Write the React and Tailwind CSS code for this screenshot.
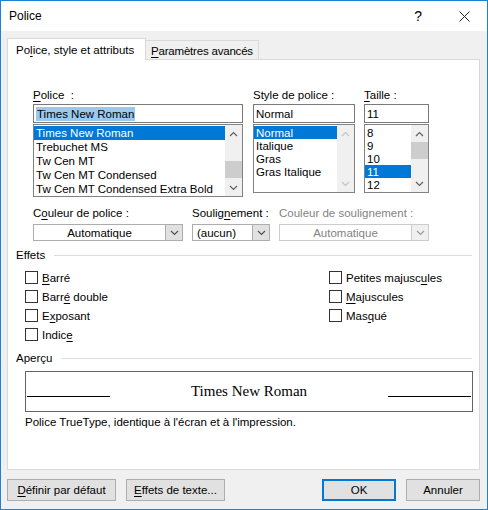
import React from 'react'

const FONTS = ['Times New Roman', 'Trebuchet MS', 'Tw Cen MT', 'Tw Cen MT Condensed', 'Tw Cen MT Condensed Extra Bold']
const STYLES = ['Normal', 'Italique', 'Gras', 'Gras Italique']
const SIZES = ['8', '9', '10', '11', '12']

function Chevron({ up, color = '#606060' }) {
  return (
    <svg width="9" height="6" viewBox="0 0 9 6" fill="none">
      <path d={up ? 'M1 5l3.5-3.5L8 5' : 'M1 1l3.5 3.5L8 1'} stroke={color} strokeWidth="1.2" />
    </svg>
  )
}

function ScrollBar({ thumbTop, disabled }) {
  return (
    <div className="w-[17px] shrink-0 flex flex-col bg-[#f0f0f0]">
      <div className="h-[17px] flex items-center justify-center">
        <Chevron up color={disabled ? '#c4c4c4' : '#606060'} />
      </div>
      <div className="flex-1 relative">
        {!disabled && (
          <div className="absolute left-0 right-0 h-[17px] bg-[#cdcdcd]" style={{ top: thumbTop }} />
        )}
      </div>
      <div className="h-[17px] flex items-center justify-center">
        <Chevron color={disabled ? '#c4c4c4' : '#606060'} />
      </div>
    </div>
  )
}

function ListBox({ items, selected, rowH, height, thumbTop, disabled }) {
  return (
    <div className="flex border border-[#828282] bg-white" style={{ height }}>
      <div className="flex-1 min-w-0 pt-[1px] overflow-hidden">
        {items.map((it) => (
          <div
            key={it}
            className={`pl-[2px] whitespace-nowrap flex items-center ${
              it === selected ? 'bg-[#0078d7] text-white' : 'text-black'
            }`}
            style={{ height: rowH }}
          >
            {it}
          </div>
        ))}
      </div>
      <ScrollBar thumbTop={thumbTop} disabled={disabled} />
    </div>
  )
}

function Field({ children }) {
  return (
    <div className="h-[19px] border border-[#7a7a7a] bg-white flex items-center pl-[2px]">{children}</div>
  )
}

function Combo({ w, children, center, disabled }) {
  return (
    <div
      className={`h-[17px] flex border bg-white ${disabled ? 'border-[#cccccc] text-[#838383]' : 'border-[#adadad] text-black'}`}
      style={{ width: w }}
    >
      <div className={`flex-1 flex items-center ${center ? 'justify-center' : 'pl-[4px]'}`}>{children}</div>
      <div
        className={`w-[17px] flex items-center justify-center border-l ${
          disabled ? 'bg-[#f0f0f0] border-[#cccccc]' : 'bg-[#e1e1e1] border-[#adadad]'
        }`}
      >
        <Chevron color={disabled ? '#9a9a9a' : '#505050'} />
      </div>
    </div>
  )
}

function Check({ children }) {
  return (
    <div className="h-[19px] flex items-center gap-[4px]">
      <div className="w-[13px] h-[13px] border border-[#333333] bg-white" />
      <span>{children}</span>
    </div>
  )
}

function Btn({ w, children, primary }) {
  return (
    <div
      className={`h-[22px] flex items-center justify-center bg-[#e1e1e1] ${
        primary ? 'border-2 border-[#0078d7]' : 'border border-[#adadad]'
      }`}
      style={{ width: w }}
    >
      {children}
    </div>
  )
}

function Group({ title, lineMl }) {
  return (
    <div className="h-[14px] flex items-center pl-[8px] pr-[7px]">
      <span>{title}</span>
      <div className="flex-1 h-px bg-[#dcdcdc]" style={{ marginLeft: lineMl }} />
    </div>
  )
}

export default function App() {
  return (
    <div className="w-[488px] h-[510px] border border-[#1883d7] bg-[#f0f0f0] flex flex-col font-['Liberation_Sans',Arial,sans-serif] text-[11.5px] leading-[14px] text-black">
      {/* Title bar */}
      <div className="h-[30px] bg-white flex items-center pl-[8px] pr-[17px] shrink-0">
        <span className="text-[12px]">Police</span>
        <span className="ml-auto text-[14px] mr-[37px]">?</span>
        <svg width="11" height="11" viewBox="0 0 11 11">
          <path d="M0.5 0.5l10 10M10.5 0.5l-10 10" stroke="#222" strokeWidth="1" />
        </svg>
      </div>

      {/* Tabs */}
      <div className="flex items-end pt-[7px] pl-[6px]">
        <div className="relative z-10 -mb-px h-[22px] w-[139px] bg-white border border-b-0 border-[#d9d9d9] pl-[8px] pt-[4px] whitespace-nowrap">
          Po<u className="underline-offset-2">l</u>ice, style et attributs
        </div>
        <div className="h-[19px] w-[113px] border border-b-0 border-l-0 border-[#d9d9d9] pl-[5px] pt-[3px] whitespace-nowrap tracking-[-0.2px]">
          <u className="underline-offset-2">P</u>aramètres avancés
        </div>
      </div>

      {/* Panel */}
      <div className="ml-[6px] w-[473px] h-[411px] bg-white border border-[#d9d9d9] pt-[28px] flex flex-col">
        <div className="flex pl-[25px]">
          <div className="w-[210px]">
            <div className="mb-[2px]">
              <u className="underline-offset-2">P</u>olice&nbsp; :
            </div>
            <Field>
              <span className="bg-[#99c9ef] px-[1px]">Times New Roman</span>
            </Field>
            <div className="mt-[1px]">
              <ListBox items={FONTS} selected="Times New Roman" rowH={14} height={73} thumbTop={19} />
            </div>
          </div>
          <div className="w-[102px] ml-[10px]">
            <div className="mb-[2px]">Style de police :</div>
            <Field>Normal</Field>
            <div className="mt-[1px]">
              <ListBox items={STYLES} selected="Normal" rowH={13} height={69} disabled />
            </div>
          </div>
          <div className="w-[65px] ml-[9px]">
            <div className="mb-[2px]">
              <u className="underline-offset-2">T</u>aille :
            </div>
            <Field>11</Field>
            <div className="mt-[1px]">
              <ListBox items={SIZES} selected="11" rowH={13} height={69} thumbTop={0} />
            </div>
          </div>
        </div>

        {/* Colour / underline */}
        <div className="flex pl-[25px] mt-[9px]">
          <div>
            <div className="mb-[4px]">
              C<u className="underline-offset-2">o</u>uleur de police :
            </div>
            <Combo w={150} center>Automatique</Combo>
          </div>
          <div className="ml-[9px]">
            <div className="mb-[4px] whitespace-nowrap">
              Soulig<u className="underline-offset-2">n</u>ement :
            </div>
            <Combo w={78}>(aucun)</Combo>
          </div>
          <div className="ml-[9px]">
            <div className="mb-[4px] text-[#838383]">Couleur de soulignement :</div>
            <Combo w={150} center disabled>Automatique</Combo>
          </div>
        </div>

        {/* Effets */}
        <div className="mt-[7px]">
          <Group title="Effets" lineMl={9} />
        </div>
        <div className="mt-[6px] flex pl-[17px]">
          <div className="w-[304px]">
            <Check><u className="underline-offset-2">B</u>arré</Check>
            <Check>Barr<u className="underline-offset-2">é</u> double</Check>
            <Check>E<u className="underline-offset-2">x</u>posant</Check>
            <Check>Indic<u className="underline-offset-2">e</u></Check>
          </div>
          <div>
            <Check>Petites majusc<u className="underline-offset-2">u</u>les</Check>
            <Check><u className="underline-offset-2">M</u>ajuscules</Check>
            <Check>Mas<u className="underline-offset-2">q</u>ué</Check>
          </div>
        </div>

        {/* Aperçu */}
        <div className="mt-[7px]">
          <Group title="Aperçu" lineMl={9} />
        </div>
        <div className="ml-[17px] w-[448px] h-[41px] mt-[6px] border border-[#646464] flex items-center px-[1px]">
          <div className="w-[83px] h-px bg-black self-end mb-[14px]" />
          <div className="flex-1 text-center font-['Liberation_Serif','Times_New_Roman',serif] text-[15px] leading-[17px]">
            Times New Roman
          </div>
          <div className="w-[83px] h-px bg-black self-end mb-[14px]" />
        </div>
        <div className="ml-[17px] mt-[3px]">Police TrueType, identique à l'écran et à l'impression.</div>
      </div>

      {/* Footer buttons */}
      <div className="flex pl-[6px] pr-[7px] mt-[9px]">
        <Btn w={109}>
          <span><u className="underline-offset-2">D</u>éfinir par défaut</span>
        </Btn>
        <div className="ml-[10px]">
          <Btn w={99}>
            <span><u className="underline-offset-2">E</u>ffets de texte...</span>
          </Btn>
        </div>
        <div className="ml-auto">
          <Btn w={74} primary>OK</Btn>
        </div>
        <div className="ml-[10px]">
          <Btn w={74}>Annuler</Btn>
        </div>
      </div>
    </div>
  )
}
